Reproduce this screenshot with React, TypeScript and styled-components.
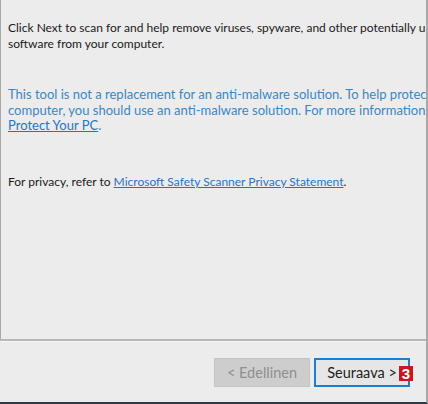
import React from "react";
import styled, { createGlobalStyle } from "styled-components";

const Global = createGlobalStyle`
  html, body { margin: 0; padding: 0; background: #ececec; }
  body { font-family: "Lato", "Open Sans", sans-serif; }
`;

const Frame = styled.div`
  width: 428px;
  height: 404px;
  box-sizing: border-box;
  display: flex;
  flex-direction: column;
  background: #ececec;
  border-right: 2px solid #a9a9a9;
  border-bottom: 2px solid #2c3a46;
  overflow: hidden;
`;

const Content = styled.div`
  flex: 1;
  box-sizing: border-box;
  border-left: 1px solid #a9a9a9;
  padding: 20px 0 0 7px;
  display: flex;
  flex-direction: column;
  white-space: nowrap;
`;

const Para = styled.p<{ $tone?: "info"; $top?: number }>`
  margin: ${(p) => p.$top ?? 0}px 0 0 0;
  font-size: ${(p) => (p.$tone === "info" ? 13 : 12)}px;
  line-height: 15.5px;
  color: ${(p) => (p.$tone === "info" ? "#3a86c6" : "#1a1a1a")};
`;

const Link = styled.a`
  color: #1f74c8;
  text-decoration: underline;
  cursor: pointer;
`;

const Separator = styled.div`
  height: 3px;
  box-sizing: border-box;
  border-top: 2px solid #b8b8b8;
  border-bottom: 1px solid #f6f6f6;
`;

const Footer = styled.div`
  height: 60px;
  box-sizing: border-box;
  display: flex;
  justify-content: flex-end;
  align-items: flex-start;
  gap: 4px;
  padding: 16px 16px 0 0;
`;

const Button = styled.div<{ $disabled?: boolean }>`
  position: relative;
  width: 96px;
  height: 29px;
  box-sizing: border-box;
  display: flex;
  align-items: center;
  justify-content: center;
  font-size: 14.5px;
  border: ${(p) => (p.$disabled ? "1px solid #c4c4c4" : "2px solid #1a7fd0")};
  background: ${(p) => (p.$disabled ? "#cdcdcd" : "#e6e6e6")};
  color: ${(p) => (p.$disabled ? "#8f8f8f" : "#1d1d1d")};
`;

const Badge = styled.span`
  position: absolute;
  right: -5px;
  top: 6px;
  width: 14px;
  height: 15px;
  background: #c8171f;
  color: #fff;
  font-family: "Liberation Sans", Arial, sans-serif;
  font-weight: 700;
  font-size: 15px;
  line-height: 15px;
  text-align: center;
`;

export default function App() {
  return (
    <>
      <Global />
      <Frame>
        <Content>
          <Para>
            Click Next to scan for and help remove viruses, spyware, and other potentially unwanted
            <br />
            software from your computer.
          </Para>
          <Para $tone="info" $top={36}>
            This tool is not a replacement for an anti-malware solution. To help protect your
            <br />
            computer, you should use an anti-malware solution. For more information, see
            <br />
            <Link>Protect Your PC</Link>.
          </Para>
          <Para $top={40}>
            For privacy, refer to <Link>Microsoft Safety Scanner Privacy Statement</Link>.
          </Para>
        </Content>
        <Separator />
        <Footer>
          <Button $disabled>&lt; Edellinen</Button>
          <Button>
            Seuraava &gt;
            <Badge>3</Badge>
          </Button>
        </Footer>
      </Frame>
    </>
  );
}
